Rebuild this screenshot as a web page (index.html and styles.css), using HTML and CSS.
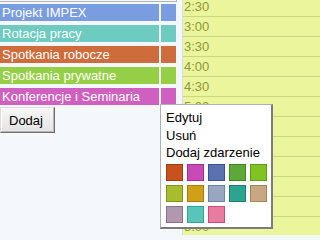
FILE: index.html
```html
<!DOCTYPE html>
<html>
<head>
<meta charset="utf-8">
<link rel="stylesheet" href="styles.css">
</head>
<body>
<div class="app">
  <div class="left">
    <div class="top-edge"></div>
    <div class="cats">
      <div class="cat"><div class="bar c-blue">Projekt IMPEX</div><div class="sq c-blue"></div></div>
      <div class="cat"><div class="bar c-teal">Rotacja pracy</div><div class="sq c-teal"></div></div>
      <div class="cat"><div class="bar c-orange">Spotkania robocze</div><div class="sq c-orange"></div></div>
      <div class="cat"><div class="bar c-green">Spotkania prywatne</div><div class="sq c-green"></div></div>
      <div class="cat"><div class="bar c-pink">Konferencje i Seminaria</div><div class="sq c-pink"></div></div>
    </div>
    <button class="btn">Dodaj</button>
  </div>
  <div class="right">
    <div class="row first">2:30</div>
    <div class="row">3:00</div>
    <div class="row">3:30</div>
    <div class="row">4:00</div>
    <div class="row">4:30</div>
    <div class="row">5:00</div>
    <div class="row"></div>
    <div class="row"></div>
    <div class="row"></div>
    <div class="row"></div>
    <div class="row"></div>
    <div class="row">8:00</div>
  </div>
  <div class="menu">
    <div class="item">Edytuj</div>
    <div class="item">Usuń</div>
    <div class="item">Dodaj zdarzenie</div>
    <div class="swatches">
      <span class="sw s1"></span><span class="sw s2"></span><span class="sw s3"></span><span class="sw s4"></span><span class="sw s5"></span>
      <span class="sw s6"></span><span class="sw s7"></span><span class="sw s8"></span><span class="sw s9"></span><span class="sw s10"></span>
      <span class="sw s11"></span><span class="sw s12"></span><span class="sw s13"></span>
    </div>
  </div>
</div>
</body>
</html>
```

FILE: styles.css
```css
html, body {
  margin: 0;
  padding: 0;
}
body {
  height: 235px;
  overflow: hidden;
  background: #f4f8fc;
  font-family: "Liberation Sans", Arial, sans-serif;
  font-size: 13px;
}
.app {
  position: relative;
  display: flex;
  width: 100%;
  height: 235px;
  overflow: hidden;
}
.left {
  width: 182px;
  flex: none;
  border-right: 1px solid #d8dcef;
  background: #f4f8fc;
}
.top-edge {
  width: 176px;
  height: 1px;
  border-bottom: 1px solid #b4b4b4;
  border-right: 1px solid #b4b4b4;
}
.cats {
  display: flex;
  flex-direction: column;
  gap: 4px;
  margin-top: 2px;
}
.cat {
  display: flex;
  gap: 2px;
  height: 17px;
}
.bar {
  width: 159px;
  height: 17px;
  line-height: 17px;
  padding-left: 2px;
  box-sizing: border-box;
  color: #ffffff;
  white-space: nowrap;
  overflow: hidden;
}
.sq {
  width: 15px;
  height: 17px;
}
.c-blue { background: #7a9de0; }
.c-teal { background: #6ecbbf; }
.c-orange { background: #ce6c3c; }
.c-green { background: #95cf46; }
.c-pink { background: #cf60c0; }
.btn {
  display: block;
  margin: 2px 0 0 0;
  width: 55px;
  height: 26px;
  padding: 0 0 0 8px;
  text-align: left;
  font-family: "Liberation Sans", Arial, sans-serif;
  font-size: 13px;
  color: #000;
  background: linear-gradient(#f7f7f7, #e3e3e3);
  border-style: solid;
  border-width: 1px;
  border-color: #dcdcdc #6e6e6e #6e6e6e #dcdcdc;
  box-shadow: inset -1px -1px 0 #b8b8b8, inset 1px 1px 0 #ffffff;
  border-radius: 0;
}
.right {
  flex: 1;
  background: #ebf59b;
}
.row {
  box-sizing: border-box;
  height: 20px;
  border-bottom: 1px solid #c9d880;
  padding: 1px 0 0 1px;
  line-height: 18px;
  color: #8b9a3c;
  white-space: nowrap;
}
.row.first {
  margin-top: -3px;
}
.menu {
  position: absolute;
  left: 160px;
  top: 104px;
  box-sizing: border-box;
  background: #ffffff;
  border-top: 1px solid #b0b0b0;
  border-left: 1px solid #b0b0b0;
  border-right: 2px solid #7c7c7c;
  border-bottom: 2px solid #7c7c7c;
  padding: 4px 0 0 5px;
  width: 113px;
  height: 125px;
  color: #000;
}
.item {
  line-height: 17.5px;
  white-space: nowrap;
}
.swatches {
  display: grid;
  grid-template-columns: repeat(5, 17px);
  grid-auto-rows: 17px;
  gap: 4px;
  margin-top: 2.5px;
}
.sw {
  display: block;
  box-sizing: border-box;
  border: 1px solid;
}
.s1 { background: #c8521e; border-color: #a03c10; }
.s2 { background: #c84ab8; border-color: #a02e90; }
.s3 { background: #5a72b0; border-color: #3a5090; }
.s4 { background: #5ea83a; border-color: #3c8a1e; }
.s5 { background: #80c424; border-color: #5e9e10; }
.s6 { background: #a8bc30; border-color: #80941a; }
.s7 { background: #d0a018; border-color: #a87e0a; }
.s8 { background: #98a6c2; border-color: #7080a0; }
.s9 { background: #2ca490; border-color: #188070; }
.s10 { background: #c8a880; border-color: #a0845a; }
.s11 { background: #b098b0; border-color: #8a708a; }
.s12 { background: #5ac4b8; border-color: #28a898; }
.s13 { background: #e87ca0; border-color: #d04878; }
```
